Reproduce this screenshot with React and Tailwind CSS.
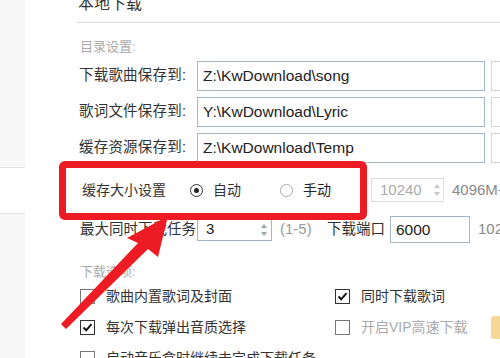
import React from "react";

function Radio({ checked }) {
  return (
    <span
      className={
        "w-[13px] h-[13px] rounded-full border flex items-center justify-center shrink-0 " +
        (checked ? "border-[#333]" : "border-[#aaa]")
      }
    >
      {checked && <span className="w-[5px] h-[5px] rounded-full bg-[#222]" />}
    </span>
  );
}

function Check({ checked }) {
  return (
    <span
      className={
        "w-[15px] h-[15px] border flex items-center justify-center bg-white shrink-0 " +
        (checked ? "border-[#333]" : "border-[#777]")
      }
    >
      {checked && (
        <svg width="11" height="11" viewBox="0 0 11 11">
          <path d="M1.5 5.5 L4.2 8.3 L9.5 2.2" fill="none" stroke="#111" strokeWidth="2" />
        </svg>
      )}
    </span>
  );
}

function Spin({ light }) {
  const c = light ? "#c8c8c8" : "#9aa";
  return (
    <svg width="8" height="16" viewBox="0 0 8 16" className="shrink-0">
      <path d="M1 6 L4 2 L7 6 Z" fill={c} />
      <path d="M1 10 L4 14 L7 10 Z" fill={c} />
    </svg>
  );
}

export default function App() {
  const paths = [
    { label: "下载歌曲保存到:", value: "Z:\\KwDownload\\song" },
    { label: "歌词文件保存到:", value: "Y:\\KwDownload\\Lyric" },
    { label: "缓存资源保存到:", value: "Z:\\KwDownload\\Temp" },
  ];

  return (
    <div className="relative w-[500px] h-[358px] overflow-hidden bg-white flex text-[14px] text-[#333] font-['Liberation_Sans','Noto_Sans_CJK_SC',sans-serif]">
      {/* sidebar edge */}
      <div className="w-[25px] flex flex-col shrink-0">
        <div className="h-[167px] shrink-0 bg-[#f7f7f7]" />
        <div className="h-[47px] shrink-0 bg-white border-y border-[#e3e3e3]" />
        <div className="flex-1 bg-[#f7f7f7]" />
      </div>

      <div className="flex-1 pl-[52px] min-w-0">
        {/* title */}
        <div className="h-[23px] border-b border-[#d9d9d9] overflow-hidden">
          <div className="text-[16px] leading-[16px] -mt-[4px] ml-[1px] text-[#333]">本地下载</div>
        </div>

        <div className="h-[38px] pt-[15px] pl-[3px] text-[13px] leading-[18px] text-[#aaa]">目录设置:</div>

        {/* directories */}
        <div className="flex flex-col gap-[6px] pl-[2px]">
          {paths.map((p) => (
            <div key={p.label} className="h-[30px] flex items-center">
              <span className="w-[118px] shrink-0 text-[14.5px] tracking-[0.2px]">{p.label}</span>
              <div className="w-[288px] h-[30px] shrink-0 border border-[#a3b7c6] flex items-center pl-[5px] text-[15.5px] text-[#222]">
                {p.value}
              </div>
              <div className="ml-[6px] w-[60px] h-[30px] border border-[#d5d5d5] shrink-0" />
            </div>
          ))}
        </div>

        {/* cache size */}
        <div className="mt-[15px] h-[24px] flex items-center pl-[5px]">
          <span className="w-[108px] shrink-0 text-[14px]">缓存大小设置</span>
          <Radio checked />
          <span className="ml-[10px] w-[67px] shrink-0 text-[14px]">自动</span>
          <Radio />
          <span className="ml-[10px] w-[68px] shrink-0 text-[14px] text-[#222]">手动</span>
          <div className="w-[73px] h-[24px] shrink-0 border border-[#dcdcdc] flex items-center justify-between pl-[8px] pr-[2px] text-[15px] text-[#aaa]">
            10240
            <Spin light />
          </div>
          <span className="ml-[8px] text-[15px] text-[#888] whitespace-nowrap">4096M-</span>
        </div>

        {/* max tasks */}
        <div className="mt-[14px] h-[27px] flex items-center pl-[3px]">
          <span className="w-[117px] shrink-0 text-[14.5px]">最大同时下载任务</span>
          <div className="w-[75px] h-[23px] shrink-0 border border-[#a3b7c6] flex items-center justify-between pl-[8px] pr-[3px] text-[15px] text-[#222]">
            3
            <Spin />
          </div>
          <span className="ml-[8px] w-[47px] shrink-0 text-[15px] text-[#999]">(1-5)</span>
          <span className="w-[63px] shrink-0 text-[14.5px]">下载端口</span>
          <div className="w-[80px] h-[27px] shrink-0 border border-[#a3b7c6] flex items-center pl-[5px] text-[15.5px] text-[#222]">6000</div>
          <span className="ml-[8px] text-[15px] text-[#888] whitespace-nowrap">102</span>
        </div>

        <div className="mt-[20px] h-[18px] pl-[3px] text-[13px] leading-[18px] text-[#aaa]">下载选项:</div>

        {/* options */}
        <div className="mt-[4px] pl-[3px] grid grid-cols-[255px_1fr] gap-y-[9px] text-[14px]">
          <div className="h-[22px] flex items-center gap-[11px]">
            <Check />
            <span>歌曲内置歌词及封面</span>
          </div>
          <div className="h-[22px] flex items-center gap-[11px]">
            <Check checked />
            <span>同时下载歌词</span>
          </div>
          <div className="h-[22px] flex items-center gap-[11px]">
            <Check checked />
            <span>每次下载弹出音质选择</span>
          </div>
          <div className="h-[22px] flex items-center gap-[11px]">
            <Check />
            <span className="text-[#aaa] w-[119px] shrink-0 whitespace-nowrap">开启VIP高速下载</span>
            <span className="w-[20px] h-[23px] rounded-[3px] bg-[#f5d796] shrink-0" />
          </div>
          <div className="h-[22px] flex items-center gap-[11px]">
            <Check />
            <span className="whitespace-nowrap">启动音乐盒时继续未完成下载任务</span>
          </div>
        </div>
      </div>

      {/* annotation */}
      <div className="absolute left-[59px] top-[161px] w-[308px] h-[59px] border-[7px] border-[#ed1c24] rounded-[6px]" />
      <svg className="absolute left-0 top-0" width="500" height="358" viewBox="0 0 500 358">
        <polygon
          points="168,216 158,257 148,249 66,329 61,324 138,243 127,238"
          fill="#ed1c24"
        />
      </svg>
    </div>
  );
}
